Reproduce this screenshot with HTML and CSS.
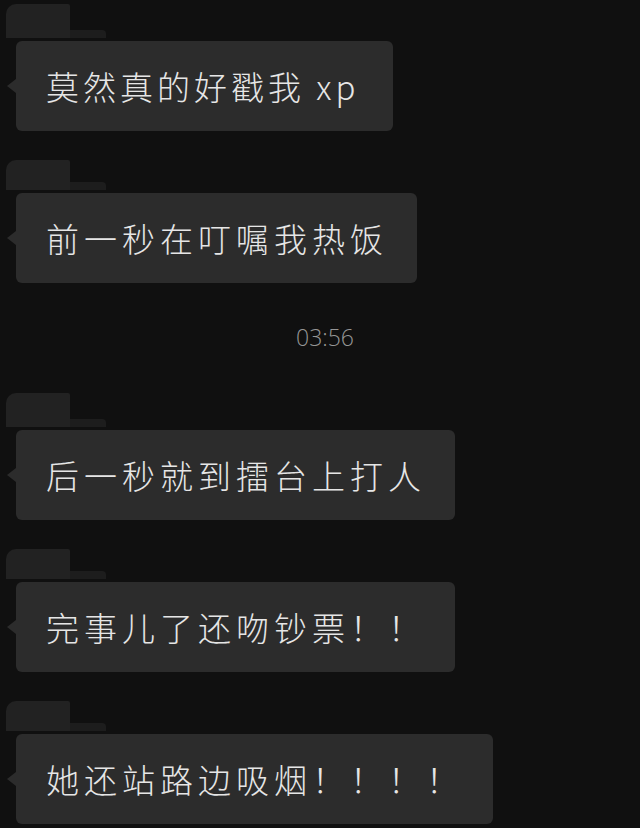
FILE: index.html
```html
<!DOCTYPE html>
<html lang="zh-CN">
<head>
    <meta charset="UTF-8">
    <meta name="viewport" content="width=device-width, initial-scale=1.0">
    <title>聊天记录</title>
    <link rel="stylesheet" href="styles.css">
</head>
<body>
    <div class="chat">
        <div class="msg first">
            <div class="name"><span class="smudge tall"></span><span class="smudge bar"></span></div>
            <div class="bubble tight">莫然真的好戳我 xp</div>
        </div>

        <div class="msg">
            <div class="name"><span class="smudge"></span><span class="smudge bar"></span></div>
            <div class="bubble">前一秒在叮嘱我热饭</div>
        </div>

        <div class="time">03:56</div>

        <div class="msg after-time">
            <div class="name"><span class="smudge tall"></span><span class="smudge bar"></span></div>
            <div class="bubble">后一秒就到擂台上打人</div>
        </div>

        <div class="msg">
            <div class="name"><span class="smudge"></span><span class="smudge bar"></span></div>
            <div class="bubble">完事儿了还吻钞票！！</div>
        </div>

        <div class="msg">
            <div class="name"><span class="smudge"></span><span class="smudge bar"></span></div>
            <div class="bubble">她还站路边吸烟！！！！</div>
        </div>
    </div>
</body>
</html>
```

FILE: styles.css
```css
html, body {
    background-color: #101010;
}

body {
    margin: 0;
    font-family: "Noto Sans CJK SC", "Liberation Sans", sans-serif;
    color: #e6e6e6;
}

.chat {
    display: flex;
    flex-direction: column;
    align-items: flex-start;
    padding-left: 16px;
}

.msg {
    display: flex;
    flex-direction: column;
    align-items: flex-start;
}

.name {
    display: flex;
    align-items: flex-end;
    height: 34px;
    margin-top: 25px;
    margin-bottom: 3px;
    margin-left: -10px;
}

.first .name {
    margin-top: 4px;
}

.after-time .name {
    margin-top: 44px;
}

.smudge {
    display: block;
    width: 64px;
    height: 30px;
    background-color: #222;
    border-radius: 10px 2px 0 0;
}

.smudge.tall {
    height: 34px;
}

.smudge.bar {
    width: 36px;
    height: 8px;
    border-radius: 0 4px 0 0;
    background-color: #1d1d1d;
}

.bubble {
    position: relative;
    height: 90px;
    line-height: 90px;
    padding: 0 29px 0 30px;
    background-color: #2c2c2c;
    border-radius: 6px;
    font-size: 33px;
    font-weight: 300;
    letter-spacing: 5px;
    white-space: nowrap;
}

.bubble.tight {
    letter-spacing: 4px;
    padding-right: 34px;
}

.bubble::before {
    content: "";
    position: absolute;
    left: -9px;
    top: 38px;
    border-top: 7px solid transparent;
    border-bottom: 7px solid transparent;
    border-right: 9px solid #2c2c2c;
}

.time {
    align-self: center;
    margin: 42px 0 0 -6px;
    height: 24px;
    line-height: 24px;
    font-family: "Open Sans", "Liberation Sans", sans-serif;
    font-weight: 300;
    font-size: 23px;
    color: #969696;
}
```
